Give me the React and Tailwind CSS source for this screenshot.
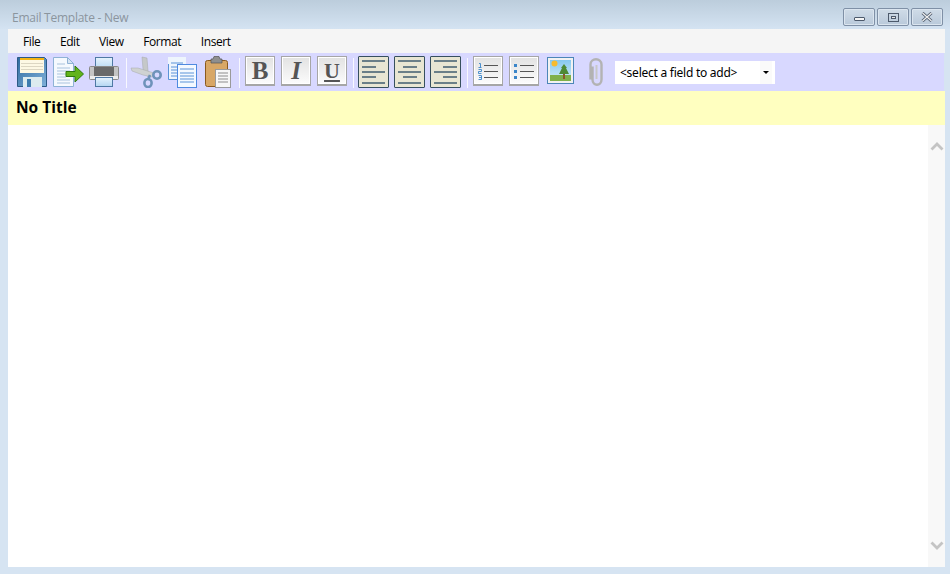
import React from 'react';

const uiFont = "font-['Open_Sans','Noto_Sans',sans-serif]";

function SaveIcon() {
  return (
    <svg width="30" height="30" viewBox="0 0 30 30">
      <defs>
        <linearGradient id="saveBody" x1="0" y1="0" x2="1" y2="1">
          <stop offset="0" stopColor="#2f6aa0" />
          <stop offset="1" stopColor="#7fb0d8" />
        </linearGradient>
      </defs>
      <path d="M0.500 0.500h27l2 2v27H0.500z" fill="url(#saveBody)" stroke="#2c5a86" />
      <rect x="3" y="1" width="24" height="15" fill="#fdf8e4" />
      <rect x="3" y="1" width="24" height="2" fill="#f3b415" />
      <path d="M4 6.500h22M4 9.500h22M4 12.500h22" stroke="#dcd6c2" />
      <rect x="6" y="20" width="19" height="10" fill="#dcebef" />
      <rect x="10" y="22" width="4" height="8" fill="#3d7cae" />
    </svg>
  );
}

function ExportIcon() {
  return (
    <svg width="31" height="30" viewBox="0 0 31 30">
      <path d="M0.500 0.500h14l6 6v23h-20z" fill="#f5f9fe" stroke="#8fb2d6" />
      <path d="M14.500 0.500v6h6z" fill="#d6e4f3" stroke="#8fb2d6" />
      <path d="M4 7h8M4 11h13M4 14h13M4 17h9M4 20h9M4 23h13M4 26h13" stroke="#a9c3de" />
      <path d="M13 14.500h9V9l8.500 8-8.500 8v-5.500h-9z" fill="#62b41b" stroke="#2f7a0c" />
    </svg>
  );
}

function PrinterIcon() {
  return (
    <svg width="30" height="30" viewBox="0 0 30 30">
      <defs>
        <linearGradient id="paperBlue" x1="0" y1="0" x2="0" y2="1">
          <stop offset="0" stopColor="#e6f3fd" />
          <stop offset="1" stopColor="#b4d6f2" />
        </linearGradient>
      </defs>
      <rect x="6.500" y="0.500" width="17" height="12" fill="url(#paperBlue)" stroke="#4f79a4" />
      <rect x="0.500" y="9.500" width="29" height="13" rx="1" fill="#c4c4c4" stroke="#8a8a8a" />
      <rect x="5" y="10" width="20" height="9" fill="#696969" />
      <rect x="1" y="19" width="28" height="3" fill="#ececec" />
      <rect x="6.500" y="20.500" width="17" height="9" fill="url(#paperBlue)" stroke="#4f79a4" />
    </svg>
  );
}

function ScissorsIcon() {
  return (
    <svg width="32" height="32" viewBox="0 0 32 32">
      <path d="M12 1l5 1 1 13 3 4-3 2-5-8z" fill="#c5c8c9" stroke="#a5a8a8" strokeWidth="0.500" />
      <path d="M1 12h7l16 5-2 4-9-2-11-4z" fill="#cfd2d2" stroke="#a5a8a8" strokeWidth="0.500" />
      <circle cx="27" cy="19" r="3.700" fill="none" stroke="#6f93ba" strokeWidth="2.600" />
      <ellipse cx="18" cy="27" rx="3.600" ry="4" fill="none" stroke="#6f93ba" strokeWidth="2.600" />
      <path d="M20 19l-2 5" stroke="#6f93ba" strokeWidth="2.600" />
    </svg>
  );
}

function CopyIcon() {
  return (
    <svg width="29" height="32" viewBox="0 0 29 32">
      <rect x="0" y="1" width="18" height="22" fill="#eef5fd" />
      <path d="M0.500 23.500V8M0.500 23.500H10" stroke="#5b93d8" />
      <path d="M3 7h12M3 11h6M3 14h6M3 17h6M3 20h6" stroke="#5b93d8" />
      <rect x="9.500" y="8.500" width="19" height="23" fill="#f4f9ff" stroke="#4f8ae0" />
      <path d="M12 13h14M12 17h14M12 20h14M12 23h14M12 26h14" stroke="#5b93d8" />
    </svg>
  );
}

function PasteIcon() {
  return (
    <svg width="26" height="32" viewBox="0 0 26 32">
      <rect x="0.500" y="4.500" width="22" height="26" rx="2" fill="#d8a766" stroke="#8a5a1f" />
      <path d="M6 7V3h2l1-2.500h5L15 3h2v4z" fill="#8f8f8f" stroke="#555" strokeWidth="0.700" />
      <rect x="10.500" y="13.500" width="15" height="18" fill="#f7f7f7" stroke="#9a9a9a" />
      <path d="M13 17h10M13 20h10M13 23h10M13 26h10" stroke="#8d8d8d" />
    </svg>
  );
}

function FormatButton({ children }) {
  return (
    <div className="mb-[2px] flex h-[30px] w-[30px] items-center justify-center border border-[#a6a6a6] border-b-2 bg-gradient-to-b from-[#e2e2e2] to-[#fcfcfc] shadow-[inset_0_0_0_1px_#fff]">
      {children}
    </div>
  );
}

function AlignButton({ bars }) {
  return (
    <div className="flex h-[32px] w-[31px] flex-col justify-center gap-[3.400px] rounded-[1px] border border-[#37505f] bg-[#e8e6d3] px-[3px]">
      {bars.map((bar, i) => (
        <div key={i} className={`flex h-[2px] ${bar.cls}`}>
          <div className={`h-[2px] ${bar.w} bg-[#6a7f88]`} />
        </div>
      ))}
    </div>
  );
}

function Separator() {
  return <div className="mt-[2px] h-[30px] w-[1px] bg-[#f8f8ff]" />;
}

function NumberedIcon() {
  return (
    <svg width="20" height="18" viewBox="0 0 20 18">
      <path d="M6 3.500h14M6 9.500h14M6 15.500h14" stroke="#555" />
      <path d="M1 1.500h1.500v4M0.500 5.500h3M0.500 7.500h3v2h-3v2h3M0.500 13.500h3v4h-3M1 15.500h2.500" stroke="#3b86c9" fill="none" strokeWidth="0.900" />
    </svg>
  );
}

function BulletIcon() {
  return (
    <svg width="20" height="18" viewBox="0 0 20 18">
      <path d="M6 3.500h14M6 9.500h14M6 15.500h14" stroke="#555" />
      <rect x="0" y="2" width="3" height="3" fill="#3b86c9" />
      <rect x="0" y="8" width="3" height="3" fill="#3b86c9" />
      <rect x="0" y="14" width="3" height="3" fill="#3b86c9" />
    </svg>
  );
}

function ImageIcon() {
  return (
    <svg width="27" height="27" viewBox="0 0 27 27">
      <defs>
        <linearGradient id="sky" x1="0" y1="0" x2="0" y2="1">
          <stop offset="0" stopColor="#86c8f0" />
          <stop offset="1" stopColor="#d2ecf8" />
        </linearGradient>
      </defs>
      <rect x="0.500" y="0.500" width="26" height="26" fill="#f2f2f2" stroke="#4c86b8" />
      <rect x="3" y="3" width="21" height="21" fill="url(#sky)" />
      <rect x="3" y="18" width="21" height="6" fill="#7fb04a" />
      <circle cx="7.500" cy="6.500" r="3" fill="#f6bb2f" />
      <rect x="16" y="16" width="2" height="6" fill="#8a5a2b" />
      <path d="M17 7l3 4h-1l3 6H12l3-6h-1z" fill="#4e8a35" />
    </svg>
  );
}

function ClipIcon() {
  return (
    <svg width="18" height="30" viewBox="0 0 18 30">
      <path d="M5.500 9v13c0 7 9 7 9 0V7C14.500 0 3.500 0 3.500 7v15" transform="translate(0 0.500)" fill="none" stroke="#b3b3b3" strokeWidth="2.400" />
      <path d="M9.500 8v14" stroke="#c8c8c8" strokeWidth="2" />
    </svg>
  );
}

function WindowButton({ children }) {
  return (
    <div className="flex h-[18px] w-[32px] items-center justify-center rounded-[2px] border border-[#7f90a6] bg-gradient-to-b from-[#d0dce8] to-[#b9c9da] shadow-[inset_0_0_0_1px_#dbe5ef]">
      {children}
    </div>
  );
}

export default function App() {
  const menu = ['File', 'Edit', 'View', 'Format', 'Insert'];

  const left = [
    { cls: 'justify-start', w: 'w-full' },
    { cls: 'justify-start', w: 'w-[14px]' },
    { cls: 'justify-start', w: 'w-full' },
    { cls: 'justify-start', w: 'w-[14px]' },
    { cls: 'justify-start', w: 'w-full' },
  ];
  const center = left.map((b) => ({ cls: 'justify-center', w: b.w }));
  const right = left.map((b) => ({ cls: 'justify-end', w: b.w }));

  return (
    <div className={`flex h-[574px] w-[950px] flex-col overflow-hidden bg-[#d6e4f2] pb-[7px] pl-[8px] pr-[5px] ${uiFont}`}>
      {/* title bar */}
      <div className="-ml-[8px] -mr-[5px] flex h-[29px] shrink-0 items-start justify-between bg-gradient-to-b from-[#bccddc] to-[#d4e3f2] pl-[12px] pr-[7px]">
        <span className="mt-[10px] text-[12px] leading-[16px] tracking-[-0.25px] text-[#8b959e]">Email Template - New</span>
        <div className="mt-[8px] flex gap-[2px]">
          <WindowButton>
            <div className="mt-[4px] h-[4px] w-[11px] rounded-[1px] border border-[#4d5a6c] bg-[#f4f4f4]" />
          </WindowButton>
          <WindowButton>
            <div className="h-[9px] w-[11px] border border-[#4d5a6c] p-[2px]">
              <div className="h-full w-full border border-[#4d5a6c] bg-[#e8e8e8]" />
            </div>
          </WindowButton>
          <WindowButton>
            <svg width="12" height="10" viewBox="0 0 12 10">
              <path d="M1.500 1l9 8M10.500 1l-9 8" stroke="#4d5a6c" strokeWidth="3" />
              <path d="M1.500 1l9 8M10.500 1l-9 8" stroke="#f0f0f0" strokeWidth="1.300" />
            </svg>
          </WindowButton>
        </div>
      </div>

      {/* menu bar */}
      <div className="flex h-[24px] shrink-0 items-center gap-[19.500px] bg-[#f5f5f5] pl-[15px] pt-[1px] text-[12px] tracking-[-0.4px] text-black">
        {menu.map((m) => (
          <span key={m}>{m}</span>
        ))}
      </div>

      {/* toolbar */}
      <div className="mr-[1px] flex h-[38px] shrink-0 items-center rounded-l-[3px] bg-[#d8d8ff] pl-[9px]">
        <SaveIcon />
        <div className="ml-[6px]"><ExportIcon /></div>
        <div className="ml-[5px]"><PrinterIcon /></div>
        <div className="ml-[7px]"><Separator /></div>
        <div className="ml-[3px]"><ScissorsIcon /></div>
        <div className="ml-[6px]"><CopyIcon /></div>
        <div className="ml-[8px]"><PasteIcon /></div>
        <div className="ml-[8px]"><Separator /></div>
        <div className="ml-[5px] flex gap-[6px]">
          <FormatButton>
            <span className="font-['Liberation_Serif',serif] text-[25px] font-bold leading-none text-[#555]">B</span>
          </FormatButton>
          <FormatButton>
            <span className="font-['Liberation_Serif',serif] text-[25px] font-bold italic leading-none text-[#555]">I</span>
          </FormatButton>
          <FormatButton>
            <span className="font-['Liberation_Serif',serif] text-[22px] font-bold leading-none text-[#555] underline">U</span>
          </FormatButton>
        </div>
        <div className="ml-[6px]"><Separator /></div>
        <div className="ml-[4px] flex gap-[5px]">
          <AlignButton bars={left} />
          <AlignButton bars={center} />
          <AlignButton bars={right} />
        </div>
        <div className="ml-[6px]"><Separator /></div>
        <div className="ml-[5px] flex gap-[6px]">
          <FormatButton><NumberedIcon /></FormatButton>
          <FormatButton><BulletIcon /></FormatButton>
        </div>
        <div className="mb-[3px] ml-[8px] flex"><ImageIcon /></div>
        <div className="ml-[13px] flex"><ClipIcon /></div>
        <div className="mt-[1px] ml-[10px] flex h-[23px] w-[160px] items-center justify-between bg-white pl-[5px] pr-[3px] font-['Noto_Sans',sans-serif] text-[12px] tracking-[-0.25px] text-black">
          <span>&lt;select a field to add&gt;</span>
          <div className="flex h-full w-[12px] items-center justify-center bg-[#fafafa]">
            <div className="h-0 w-0 border-x-[3px] border-t-[3px] border-x-transparent border-t-black" />
          </div>
        </div>
      </div>

      {/* subject row */}
      <div className="flex h-[34px] shrink-0 items-center bg-[#ffffc0] pl-[8px] text-[15.500px] font-bold text-black">
        No Title
      </div>

      {/* editor body */}
      <div className="flex min-h-0 flex-1 bg-white">
        <div className="flex-1" />
        <div className="flex w-[17px] flex-col items-center justify-between bg-[#f8f8f8] pb-[17px] pt-[17px]">
          <svg width="14" height="9" viewBox="0 0 14 9">
            <path d="M1.500 7.500L7 2l5.500 5.500" fill="none" stroke="#c4c4c4" strokeWidth="2.800" />
          </svg>
          <svg width="14" height="9" viewBox="0 0 14 9">
            <path d="M1.500 1.500L7 7l5.500-5.500" fill="none" stroke="#c4c4c4" strokeWidth="2.800" />
          </svg>
        </div>
      </div>
    </div>
  );
}
